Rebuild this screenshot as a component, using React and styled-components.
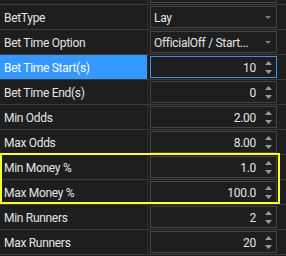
import React from "react";
import styled, { createGlobalStyle } from "styled-components";

const Global = createGlobalStyle`
  html, body { margin: 0; padding: 0; background: #1e1e1e; overflow: hidden; }
  body { width: 286px; height: 256px; }
  * { box-sizing: border-box; }
`;

const Grid = styled.div`
  display: flex;
  flex-direction: column;
  margin-top: -20px;
  width: 286px;
  font-family: Roboto, "Liberation Sans", sans-serif;
  font-size: 12px;
  letter-spacing: -0.3px;
  color: #e4e4e4;
`;

const Row = styled.div`
  display: flex;
  height: 25px;
  border-bottom: 1px solid #3a3a3a;
`;

const Label = styled.div`
  width: 147px;
  flex: none;
  display: flex;
  align-items: center;
  padding: 1px 0 0 4px;
  background: ${(p) => (p.$selected ? "#3399ff" : "#1e1e1e")};
  color: ${(p) => (p.$selected ? "#ffffff" : "#e4e4e4")};
  white-space: nowrap;
  overflow: hidden;
`;

const ColLine = styled.div`
  width: 1px;
  flex: none;
  background: #2c2c2c;
`;

const Cell = styled.div`
  flex: 1;
  display: flex;
  align-items: center;
  padding: 1px 9px 1px 2px;
`;

const Box = styled.div`
  flex: 1;
  height: 22px;
  display: flex;
  align-items: center;
  padding-top: 1px;
  border: 1px solid ${(p) => (p.$focused ? "#3d8fe6" : "#444444")};
  background: #1e1e1e;
`;

const ComboText = styled.span`
  flex: 1;
  padding-left: 3px;
  white-space: nowrap;
  overflow: hidden;
`;

const NumText = styled.span`
  flex: 1;
  text-align: right;
  padding-right: 4px;
`;

const ArrowSlot = styled.div`
  width: 16px;
  flex: none;
  display: flex;
  flex-direction: column;
  align-items: center;
  justify-content: center;
  gap: 5px;
  margin-top: -1px;
`;

const Tri = ({ up, w = 7, h = 4, color = "#9a9a9a" }) => (
  <svg width={w} height={h} viewBox={`0 0 ${w} ${h}`} style={{ display: "block" }}>
    <polygon
      points={up ? `0,${h} ${w / 2},0 ${w},${h}` : `0,0 ${w},0 ${w / 2},${h}`}
      fill={color}
    />
  </svg>
);

const Highlight = styled.div`
  position: absolute;
  left: 0;
  top: 153px;
  width: 280px;
  height: 51px;
  border: 2px solid #ffff2e;
  pointer-events: none;
`;

const Page = styled.div`
  position: relative;
  height: 256px;
  overflow: hidden;
`;

const rows = [
  { label: "", type: "num", value: "" },
  { label: "BetType", type: "combo", value: "Lay" },
  { label: "Bet Time Option", type: "combo", value: "OfficialOff / Start..." },
  { label: "Bet Time Start(s)", type: "num", value: "10", selected: true },
  { label: "Bet Time End(s)", type: "num", value: "0" },
  { label: "Min Odds", type: "num", value: "2.00" },
  { label: "Max Odds", type: "num", value: "8.00" },
  { label: "Min Money %", type: "num", value: "1.0" },
  { label: "Max Money %", type: "num", value: "100.0" },
  { label: "Min Runners", type: "num", value: "2" },
  { label: "Max Runners", type: "num", value: "20" },
];

function Combo({ value }) {
  return (
    <Box>
      <ComboText>{value}</ComboText>
      <ArrowSlot>
        <Tri w={6} h={3} color="#7c7c7c" />
      </ArrowSlot>
    </Box>
  );
}

function Num({ value, focused }) {
  return (
    <Box $focused={focused}>
      <NumText>{value}</NumText>
      <ArrowSlot>
        <Tri up />
        <Tri />
      </ArrowSlot>
    </Box>
  );
}

export default function App() {
  return (
    <Page>
      <Global />
      <Grid>
        {rows.map((r, i) => (
          <Row key={i}>
            <Label $selected={r.selected}>{r.label}</Label>
            <ColLine />
            <Cell>
              {r.type === "combo" ? (
                <Combo value={r.value} />
              ) : (
                <Num value={r.value} focused={r.selected} />
              )}
            </Cell>
          </Row>
        ))}
      </Grid>
      <Highlight />
    </Page>
  );
}
